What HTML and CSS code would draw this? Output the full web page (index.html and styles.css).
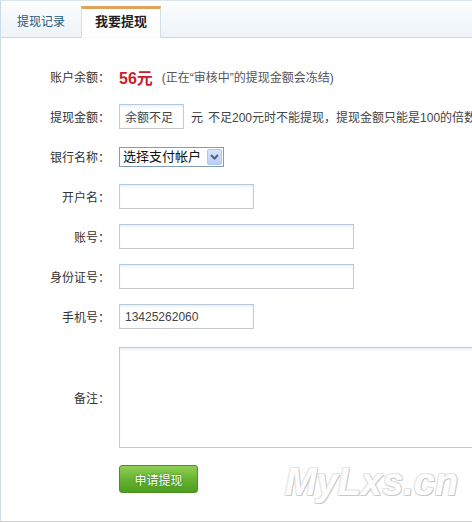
FILE: index.html
```html
<!DOCTYPE html>
<html lang="zh-CN">
	<head>
		<meta charset="UTF-8" />
		<meta name="viewport" content="width=device-width, initial-scale=1.0" />
		<title>我要提现</title>
		<link rel="stylesheet" href="styles.css">
	</head>

	<body>
		<div class="panel">
			<div class="tabs">
				<a class="tab">提现记录</a>
				<a class="tab tab-active">我要提现</a>
			</div>
			<form class="withdraw">
				<div class="row">
					<label class="row-label">账户余额：</label>
					<span class="balance">56元</span>
					<span class="tip">(正在“审核中”的提现金额会冻结)</span>
				</div>
				<div class="row">
					<label class="row-label" for="amount">提现金额：</label>
					<input class="field w-xs" id="amount" type="text" value="余额不足">
					<span class="unit">元</span>
					<span class="hint">不足200元时不能提现，提现金额只能是100的倍数</span>
				</div>
				<div class="row">
					<label class="row-label" for="bank">银行名称：</label>
					<span class="select">
						<select id="bank">
							<option>选择支付帐户</option>
						</select>
						<span class="select-arrow">
							<svg width="9" height="6" viewBox="0 0 9 6"><path d="M1 1 L4.5 4.5 L8 1" fill="none" stroke="#4d6185" stroke-width="2"/></svg>
						</span>
					</span>
				</div>
				<div class="row">
					<label class="row-label" for="holder">开户名：</label>
					<input class="field w-md" id="holder" type="text">
				</div>
				<div class="row">
					<label class="row-label" for="account">账号：</label>
					<input class="field w-lg" id="account" type="text">
				</div>
				<div class="row">
					<label class="row-label" for="idcard">身份证号：</label>
					<input class="field w-lg" id="idcard" type="text">
				</div>
				<div class="row">
					<label class="row-label" for="phone">手机号：</label>
					<input class="field w-md" id="phone" type="text" value="13425262060">
				</div>
				<div class="row row-tall">
					<label class="row-label" for="memo">备注：</label>
					<textarea class="field memo" id="memo"></textarea>
				</div>
				<div class="row row-action">
					<button class="submit" type="button">申请提现</button>
				</div>
			</form>
			<div class="watermark">MyLxs.cn</div>
		</div>
	</body>
</html>
```

FILE: styles.css
```css
html, body {
	margin: 0;
	padding: 0;
	font-family: "Liberation Sans", "Noto Sans CJK SC", sans-serif;
	background-color: #fff;
}

body {
	width: 472px;
	height: 523px;
	overflow: hidden;
}

.panel {
	position: relative;
	box-sizing: border-box;
	height: 522px;
	border-left: 1px solid #c9dde6;
	border-bottom: 1px solid #c3d8e3;
	overflow: hidden;
}

.tabs {
	display: flex;
	align-items: flex-end;
	height: 36px;
	border-top: 1px solid #dae6ec;
	border-bottom: 1px solid #c6d9e3;
	background: linear-gradient(#fcfdfe, #edf3f8);
}

.tab {
	box-sizing: border-box;
	width: 80px;
	height: 32px;
	margin-bottom: -1px;
	border-top: 3px solid transparent;
	font-size: 12px;
	line-height: 26px;
	text-align: center;
	color: #28587a;
	white-space: nowrap;
}

.tab-active {
	border-top-color: #e0a258;
	border-left: 1px solid #d2dfe7;
	border-right: 1px solid #d2dfe7;
	background: linear-gradient(#ffffff 70%, #fbfcfd);
	font-size: 13px;
	font-weight: bold;
	color: #222;
}

.withdraw {
	display: flex;
	flex-direction: column;
	gap: 15px;
	padding-top: 26px;
	margin: 0;
}

.row {
	display: flex;
	align-items: center;
	height: 25px;
	font-size: 12px;
	color: #333;
	white-space: nowrap;
}

.row-label {
	flex-shrink: 0;
	width: 109px;
	margin-right: 9px;
	text-align: right;
}

.balance {
	font-size: 16px;
	font-weight: bold;
	color: #c8202a;
}

.tip {
	margin-left: 9px;
	color: #555;
}

.unit {
	margin-left: 7px;
}

.hint {
	margin-left: 5px;
	color: #444;
}

.field {
	box-sizing: border-box;
	flex-shrink: 0;
	height: 25px;
	padding: 0 5px;
	border: 1px solid #c5c9cd;
	border-top-color: #b9c8d8;
	box-shadow: inset 0 2px 2px #edf2f8;
	font-family: inherit;
	font-size: 12px;
	color: #444;
	background-color: #fff;
	outline: none;
}

.w-xs {
	width: 65px;
}

.w-md {
	width: 135px;
}

.w-lg {
	width: 235px;
}

.row-tall {
	height: auto;
	margin-top: 3px;
}

.memo {
	width: 400px;
	height: 101px;
	resize: none;
}

.select {
	display: inline-flex;
	align-items: center;
	box-sizing: border-box;
	width: 105px;
	height: 20px;
	border: 1px solid #7f9db9;
	background-color: #fff;
}

.select select {
	flex: 1;
	min-width: 0;
	height: 18px;
	padding: 0 0 0 3px;
	border: 0;
	-webkit-appearance: none;
	appearance: none;
	background: transparent;
	font-family: inherit;
	font-size: 13px;
	color: #111;
	outline: none;
}

.select-arrow {
	display: flex;
	align-items: center;
	justify-content: center;
	box-sizing: border-box;
	width: 15px;
	height: 16px;
	margin-right: 1px;
	border: 1px solid #b3c6ee;
	border-radius: 2px;
	background: linear-gradient(#d9e4fc, #b9cdf7);
}

.row-action {
	height: 28px;
	margin-top: 2px;
	padding-left: 118px;
}

.submit {
	box-sizing: border-box;
	width: 79px;
	height: 28px;
	border: 1px solid #4c9020;
	border-radius: 3px;
	background: linear-gradient(#8fcf54, #64b22e 55%, #4f9d1f);
	font-family: inherit;
	font-size: 12px;
	color: #fff;
	text-shadow: 0 0 2px #2e6a10;
	cursor: pointer;
}

.watermark {
	position: absolute;
	left: 284px;
	top: 461px;
	font-size: 38px;
	font-weight: bold;
	font-style: italic;
	letter-spacing: 0;
	color: #fdfdfd;
	text-shadow: 1px 1px 0 #c9c9c9, -1px -1px 0 #e6e6e6, 1px -1px 0 #dedede, -1px 1px 0 #dedede;
	pointer-events: none;
}
```
